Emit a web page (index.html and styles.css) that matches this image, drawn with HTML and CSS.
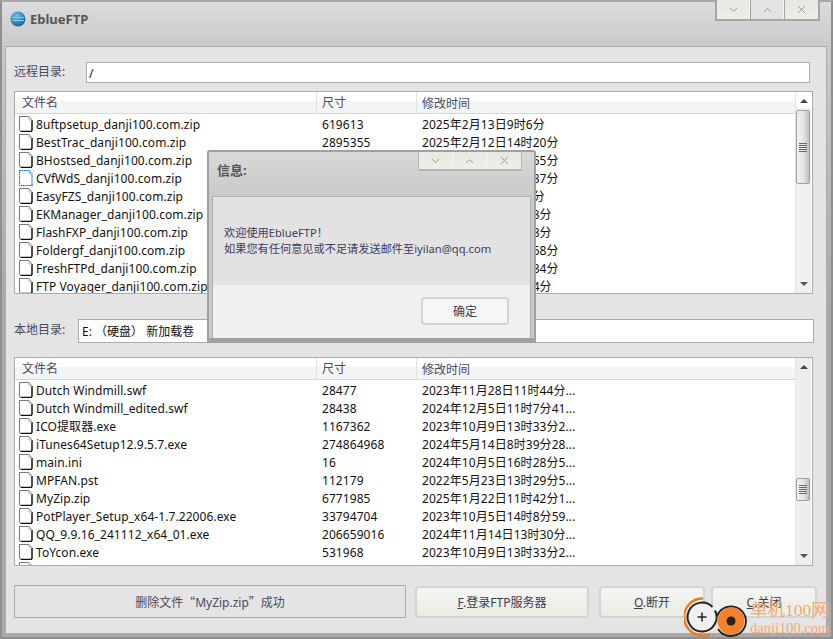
FILE: index.html
```html
<!DOCTYPE html>
<html lang="zh-CN">
<head>
    <meta charset="UTF-8">
    <title>EblueFTP</title>
    <link rel="stylesheet" href="styles.css">
</head>
<body>

    <svg class="defs" width="0" height="0">
        <symbol id="doc" viewBox="0 0 14 16">
            <path d="M.5 .5h9.500l3 3.500v10a1.500 1.500 0 0 1-1.500 1.500h-9.500a1.500 1.500 0 0 1-1.500-1.500z" fill="#fff" stroke="#777"/>
            <path d="M13 4v10a1.500 1.500 0 0 1-1.500 1.500h-9.500" fill="none" stroke="#111" stroke-width="1.300"/>
            <path d="M10 .5v3.500h3" fill="none" stroke="#bbb"/>
        </symbol>
        <symbol id="doc-blue" viewBox="0 0 14 16">
            <path d="M.5 .5h9.500l3 3.500v11.500h-12.500z" fill="#fff" stroke="#0a66d8" stroke-width="1.200" stroke-dasharray="1.500 .7"/>
            <path d="M10 .5v3.500h3" fill="none" stroke="#9cc4ee"/>
        </symbol>
        <symbol id="grip" viewBox="0 0 8 9">
            <path d="M0 .5h8M0 2.500h8M0 4.500h8M0 6.500h8M0 8.500h8" stroke="#666"/>
        </symbol>
    </svg>

    <div class="window">
        <div class="titlebar">
            <svg class="logo" width="16" height="16" viewBox="0 0 16 16">
                <defs>
                    <radialGradient id="ball" cx="40%" cy="30%" r="75%">
                        <stop offset="0" stop-color="#6cc4f0"/>
                        <stop offset="1" stop-color="#0a5f9e"/>
                    </radialGradient>
                </defs>
                <circle cx="8" cy="8" r="7.500" fill="url(#ball)"/>
                <path d="M2 6.500h12M2 9.500h12" stroke="#8cc8ec"/>
            </svg>
            <span class="app-name">EblueFTP</span>
            <div class="win-btns main-btns">
                <span class="win-btn"><svg width="9" height="6" viewBox="0 0 9 6"><path d="M1 1l3.500 3.500L8 1" fill="none" stroke="#999"/></svg></span>
                <span class="win-btn middle"><svg width="9" height="6" viewBox="0 0 9 6"><path d="M1 5l3.500-3.500L8 5" fill="none" stroke="#999"/></svg></span>
                <span class="win-btn"><svg width="9" height="9" viewBox="0 0 9 9"><path d="M1 1l7 7M8 1l-7 7" fill="none" stroke="#999"/></svg></span>
            </div>
        </div>

        <div class="panel">
            <div class="dir-row remote">
                <label class="dir-label">远程目录:</label>
                <div class="dir-input">/</div>
            </div>

            <div class="list remote-list">
                <div class="list-main">
                    <div class="list-head">
                        <span class="col-name">文件名</span>
                        <span class="col-size">尺寸</span>
                        <span class="col-time">修改时间</span>
                    </div>
                    <div class="rows">
                        <div class="row"><svg class="ico"><use href="#doc"/></svg><span class="col-name">8uftpsetup_danji100.com.zip</span><span class="col-size">619613</span><span class="col-time">2025年2月13日9时6分</span></div>
                        <div class="row"><svg class="ico"><use href="#doc"/></svg><span class="col-name">BestTrac_danji100.com.zip</span><span class="col-size">2895355</span><span class="col-time">2025年2月12日14时20分</span></div>
                        <div class="row"><svg class="ico"><use href="#doc"/></svg><span class="col-name">BHostsed_danji100.com.zip</span><span class="col-size">1286431</span><span class="col-time">2025年2月12日13时55分</span></div>
                        <div class="row"><svg class="ico"><use href="#doc-blue"/></svg><span class="col-name">CVfWdS_danji100.com.zip</span><span class="col-size">963320</span><span class="col-time">2025年2月12日11时37分</span></div>
                        <div class="row"><svg class="ico"><use href="#doc"/></svg><span class="col-name">EasyFZS_danji100.com.zip</span><span class="col-size">3310872</span><span class="col-time">2025年2月11日9时9分</span></div>
                        <div class="row"><svg class="ico"><use href="#doc"/></svg><span class="col-name">EKManager_danji100.com.zip</span><span class="col-size">745120</span><span class="col-time">2025年2月11日15时3分</span></div>
                        <div class="row"><svg class="ico"><use href="#doc"/></svg><span class="col-name">FlashFXP_danji100.com.zip</span><span class="col-size">5120768</span><span class="col-time">2025年2月11日10时3分</span></div>
                        <div class="row"><svg class="ico"><use href="#doc"/></svg><span class="col-name">Foldergf_danji100.com.zip</span><span class="col-size">418906</span><span class="col-time">2025年2月10日17时58分</span></div>
                        <div class="row"><svg class="ico"><use href="#doc"/></svg><span class="col-name">FreshFTPd_danji100.com.zip</span><span class="col-size">2207514</span><span class="col-time">2025年2月10日16时34分</span></div>
                        <div class="row"><svg class="ico"><use href="#doc"/></svg><span class="col-name">FTP Voyager_danji100.com.zip</span><span class="col-size">6631040</span><span class="col-time">2025年2月10日14时4分</span></div>
                    </div>
                </div>
                <div class="scroll">
                    <span class="arrow up"></span>
                    <div class="track remote-track"><div class="thumb long"><svg width="8" height="9"><use href="#grip"/></svg></div></div>
                    <span class="arrow down"></span>
                </div>
            </div>

            <div class="dir-row local">
                <label class="dir-label">本地目录:</label>
                <div class="dir-input drive">E:&nbsp;（硬盘）&nbsp;新加载卷</div>
            </div>

            <div class="list local-list">
                <div class="list-main">
                    <div class="list-head">
                        <span class="col-name">文件名</span>
                        <span class="col-size">尺寸</span>
                        <span class="col-time">修改时间</span>
                    </div>
                    <div class="rows">
                        <div class="row"><svg class="ico"><use href="#doc"/></svg><span class="col-name">Dutch Windmill.swf</span><span class="col-size">28477</span><span class="col-time">2023年11月28日11时44分...</span></div>
                        <div class="row"><svg class="ico"><use href="#doc"/></svg><span class="col-name">Dutch Windmill_edited.swf</span><span class="col-size">28438</span><span class="col-time">2024年12月5日11时7分41...</span></div>
                        <div class="row"><svg class="ico"><use href="#doc"/></svg><span class="col-name">ICO提取器.exe</span><span class="col-size">1167362</span><span class="col-time">2023年10月9日13时33分2...</span></div>
                        <div class="row"><svg class="ico"><use href="#doc"/></svg><span class="col-name">iTunes64Setup12.9.5.7.exe</span><span class="col-size">274864968</span><span class="col-time">2024年5月14日8时39分28...</span></div>
                        <div class="row"><svg class="ico"><use href="#doc"/></svg><span class="col-name">main.ini</span><span class="col-size">16</span><span class="col-time">2024年10月5日16时28分5...</span></div>
                        <div class="row"><svg class="ico"><use href="#doc"/></svg><span class="col-name">MPFAN.pst</span><span class="col-size">112179</span><span class="col-time">2022年5月23日13时29分5...</span></div>
                        <div class="row"><svg class="ico"><use href="#doc"/></svg><span class="col-name">MyZip.zip</span><span class="col-size">6771985</span><span class="col-time">2025年1月22日11时42分1...</span></div>
                        <div class="row"><svg class="ico"><use href="#doc"/></svg><span class="col-name">PotPlayer_Setup_x64-1.7.22006.exe</span><span class="col-size">33794704</span><span class="col-time">2023年10月5日14时8分59...</span></div>
                        <div class="row"><svg class="ico"><use href="#doc"/></svg><span class="col-name">QQ_9.9.16_241112_x64_01.exe</span><span class="col-size">206659016</span><span class="col-time">2024年11月14日13时30分...</span></div>
                        <div class="row"><svg class="ico"><use href="#doc"/></svg><span class="col-name">ToYcon.exe</span><span class="col-size">531968</span><span class="col-time">2023年10月9日13时33分2...</span></div>
                        <div class="row"><svg class="ico"><use href="#doc"/></svg></div>
                    </div>
                </div>
                <div class="scroll">
                    <span class="arrow up"></span>
                    <div class="track local-track"><div class="thumb short"><svg width="8" height="9"><use href="#grip"/></svg></div></div>
                    <span class="arrow down"></span>
                </div>
            </div>

            <div class="bottom-bar">
                <div class="status">删除文件<span class="cjk-quote">“</span>MyZip.zip<span class="cjk-quote">”</span>成功</div>
                <button class="btn btn-login"><u>F</u>.登录FTP服务器</button>
                <button class="btn btn-small"><u>O</u>.断开</button>
                <button class="btn btn-small"><u>C</u>.关闭</button>
            </div>
        </div>
    </div>

    <!-- 信息对话框 -->
    <div class="dialog">
        <div class="dialog-title">
            <span class="dialog-name">信息:</span>
            <div class="win-btns dialog-btns">
                <span class="win-btn"><svg width="9" height="6" viewBox="0 0 9 6"><path d="M1 1l3.500 3.500L8 1" fill="none" stroke="#999"/></svg></span>
                <span class="win-btn"><svg width="9" height="6" viewBox="0 0 9 6"><path d="M1 5l3.500-3.500L8 5" fill="none" stroke="#999"/></svg></span>
                <span class="win-btn"><svg width="9" height="9" viewBox="0 0 9 9"><path d="M1 1l7 7M8 1l-7 7" fill="none" stroke="#999"/></svg></span>
            </div>
        </div>
        <div class="dialog-panel">
            <div class="dialog-msg">
                <p>欢迎使用EblueFTP！</p>
                <p>如果您有任何意见或不足请发送邮件至iyilan@qq.com</p>
            </div>
            <div class="dialog-foot">
                <button class="btn dialog-ok">确定</button>
            </div>
        </div>
    </div>

    <!-- 水印 -->
    <div class="watermark">
        <svg class="wm-logo" width="66" height="43" viewBox="0 0 66 43">
            <path d="M19 2.500a18.500 18.500 0 0 0 -1 37 a20 20 0 0 0 8 -1" fill="none" stroke="#f07a1a" stroke-width="2.500"/>
            <path d="M28.500 11a14.500 14.500 0 1 0 2.500 3.500" fill="#f0f0f0" stroke="#222" stroke-width="2"/>
            <path d="M13.500 21h9M18 16.500v9" stroke="#222" stroke-width="1.500"/>
            <circle cx="47" cy="25" r="13.500" fill="#f5812a"/>
            <path d="M33 20a15 15 0 0 1 29 5a15 15 0 0 1 -15 15a15 15 0 0 1 -13 -7" fill="none" stroke="#222" stroke-width="1.800"/>
            <circle cx="47" cy="25" r="4.500" fill="#222"/>
        </svg>
        <div class="wm-text">
            <span class="wm-cn">单机100网</span>
            <span class="wm-en">danji100.com</span>
        </div>
    </div>

</body>
</html>
```

FILE: styles.css
```css
* {
    box-sizing: border-box;
}
body {
    margin: 0;
    width: 833px;
    height: 639px;
    overflow: hidden;
    position: relative;
    font-family: "Noto Sans", "Noto Sans CJK SC", sans-serif;
    font-size: 12px;
    color: #111;
}
.defs {
    position: absolute;
}
.window {
    width: 833px;
    height: 639px;
    display: flex;
    flex-direction: column;
    padding: 0 4px 4px 3px;
    background: linear-gradient(#dcdcdc, #c9c9c9 46px, #a9a9a9 300px);
    border: 2px solid #8f8f8f;
    border-top-color: #a9a9a9;
}
.titlebar {
    height: 44px;
    flex: none;
    display: flex;
    align-items: flex-start;
    padding: 9px 0 0 5px;
    position: relative;
}
.logo {
    margin-right: 4px;
}
.app-name {
    font-size: 13px;
    font-weight: bold;
    color: #555;
    line-height: 17px;
}
.win-btns {
    position: absolute;
    display: flex;
    background: #a5a5a5;
    padding: 0 2px 2px;
}
.main-btns {
    top: -2px;
    right: 7px;
}
.win-btn {
    width: 33px;
    height: 19px;
    margin-right: 1px;
    display: flex;
    align-items: center;
    justify-content: center;
    background: linear-gradient(#e6e6e4, #efefe6);
    border-right: 1px solid #f6f6f6;
}
.win-btn:last-child {
    margin-right: 0;
    border-right: none;
}
.win-btn.middle {
    background: #e3e3e3;
}
.panel {
    flex: 1;
    min-height: 0;
    display: flex;
    flex-direction: column;
    background: #e4e4e4;
    border: 1px solid #acacac;
    border-bottom: none;
    padding: 0 13px 0 8px;
}
.dir-row {
    display: flex;
    align-items: center;
    color: #4a4a5a;
}
.dir-row.remote {
    margin-top: 15px;
    padding-right: 3px;
}
.dir-row.local {
    margin-top: 25px;
}
.dir-label {
    flex: none;
    line-height: 20px;
}
.remote .dir-label {
    width: 72px;
    margin-top: -1px;
}
.local .dir-label {
    width: 64px;
    margin-top: -3px;
}
.dir-input {
    flex: 1;
    background: #fff;
    border: 1px solid #a8acb0;
    height: 21px;
    line-height: 21px;
    padding-left: 2px;
    color: #111;
}
.dir-input.drive {
    height: 24px;
    line-height: 24px;
    padding-left: 3px;
    margin-right: -1px;
}
.list {
    display: flex;
    background: #fff;
    border: 1px solid #a8acb0;
}
.remote-list {
    margin-top: 8px;
    height: 203px;
}
.local-list {
    margin-top: 14px;
    height: 209px;
}
.list-main {
    flex: 1;
    min-width: 0;
    display: flex;
    flex-direction: column;
    overflow: hidden;
}
.list-head {
    flex: none;
    height: 22px;
    display: flex;
    align-items: center;
    color: #4a4a5a;
    background: linear-gradient(#fff 45%, #f3f4f6 45%);
    border-bottom: 1px solid #d6d6d6;
    padding-left: 7px;
}
.list-head .col-name {
    width: 295px;
    border-right: 1px solid #e2e2e2;
    line-height: 22px;
    padding-top: 1px;
}
.list-head .col-size {
    width: 100px;
    padding-left: 5px;
    border-right: 1px solid #e2e2e2;
    line-height: 22px;
    padding-top: 1px;
}
.list-head .col-time {
    padding-left: 5px;
    padding-top: 1px;
}
.rows {
    padding-top: 1px;
    flex: 1;
    overflow: hidden;
}
.row {
    height: 18px;
    display: flex;
    align-items: center;
    white-space: nowrap;
    padding-left: 4px;
    letter-spacing: 0.07px;
}
.ico {
    width: 14px;
    height: 16px;
    flex: none;
    margin-right: 3px;
}
.row .col-name {
    width: 286px;
    flex: none;
}
.row .col-size {
    width: 100px;
    flex: none;
}
.scroll {
    width: 16px;
    flex: none;
    margin-right: 1px;
    background: #eeeeee;
    border-left: 1px solid #e6e6e6;
    display: flex;
    flex-direction: column;
    align-items: center;
    padding: 2px 0;
}
.remote-list .scroll {
    background: linear-gradient(#fff 16px, #f0f0f0 16px);
}
.arrow {
    flex: none;
    width: 0;
    height: 0;
    margin: 5px 0;
    border-left: 4px solid transparent;
    border-right: 4px solid transparent;
}
.arrow.up {
    border-bottom: 4px solid #444;
}
.arrow.down {
    border-top: 4px solid #555;
}
.track {
    flex: 1;
    width: 100%;
    display: flex;
    flex-direction: column;
}
.remote-track {
    padding-top: 2px;
}
.local-track {
    justify-content: flex-end;
    padding-bottom: 48px;
}
.thumb {
    width: 14px;
    display: flex;
    align-items: center;
    justify-content: center;
    background: linear-gradient(90deg, #f2f2f2, #e4e4e4 55%, #bdbdbd);
    border: 1px solid #a0a0a0;
    border-radius: 2px;
}
.thumb.long {
    height: 74px;
}
.thumb.short {
    height: 23px;
}
.bottom-bar {
    margin-top: 19px;
    display: flex;
    align-items: center;
    margin-right: -4px;
}
.status {
    width: 392px;
    height: 33px;
    line-height: 31px;
    text-align: center;
    color: #4a4a5a;
    border: 1px solid #a8acb0;
    margin-right: 9px;
}
.cjk-quote {
    font-family: "Noto Sans CJK SC", sans-serif;
}
.btn {
    font-family: inherit;
    font-size: 12px;
    color: #3c3c4c;
    height: 32px;
    padding: 0;
    background: linear-gradient(#f4f4f2, #ecece4);
    border: 2px solid #d4d4d4;
    border-radius: 4px;
}
.btn-login {
    width: 174px;
    margin-right: 10px;
}
.btn-small {
    width: 106px;
    margin-right: 6px;
}
.btn-small:last-child {
    margin-right: 0;
}
.dialog {
    position: absolute;
    left: 207px;
    top: 150px;
    width: 329px;
    height: 193px;
    display: flex;
    flex-direction: column;
    background: linear-gradient(#d8d8d8, #c9c9c9 46px);
    border: 2px solid #a0a0a0;
    border-bottom-width: 5px;
    border-radius: 3px 3px 0 0;
    padding: 0 3px;
}
.dialog-title {
    height: 44px;
    flex: none;
    position: relative;
}
.dialog-name {
    position: absolute;
    left: 5px;
    top: 8px;
    font-weight: bold;
    font-size: 13px;
    color: #555;
}
.dialog-btns {
    right: 9px;
    top: 0;
    padding: 0 1px 2px;
    background: #b4b4b4;
    border-radius: 0 0 0 3px;
}
.dialog-btns .win-btn {
    height: 17px;
    width: 34px;
    margin-right: 0;
    background: linear-gradient(#e8e8e4, #efefe6);
}
.dialog-panel {
    flex: 1;
    display: flex;
    flex-direction: column;
    background: #f0f0f0;
    border: 1px solid #b0b0b0;
    border-bottom: none;
}
.dialog-msg {
    height: 88px;
    background: #e2e2e2;
    padding: 28px 0 0 11px;
    color: #3c3c60;
    font-size: 11.200px;
}
.dialog-msg p {
    margin: 0;
    line-height: 16px;
}
.dialog-foot {
    flex: 1;
    display: flex;
    justify-content: flex-end;
    padding: 12px 21px 0 0;
}
.dialog-ok {
    width: 88px;
    height: 28px;
    background: #f6f6f6;
}
.watermark {
    position: absolute;
    left: 684px;
    top: 596px;
    display: flex;
    align-items: flex-start;
}
.wm-logo {
    flex: none;
}
.wm-text {
    display: flex;
    flex-direction: column;
    color: #f5a873;
    font-family: "Liberation Serif", "Noto Sans CJK SC", serif;
    white-space: nowrap;
    margin-top: 4px;
}
.wm-cn {
    font-size: 17.500px;
    line-height: 20px;
}
.wm-en {
    font-size: 14.500px;
    line-height: 17px;
}
```
